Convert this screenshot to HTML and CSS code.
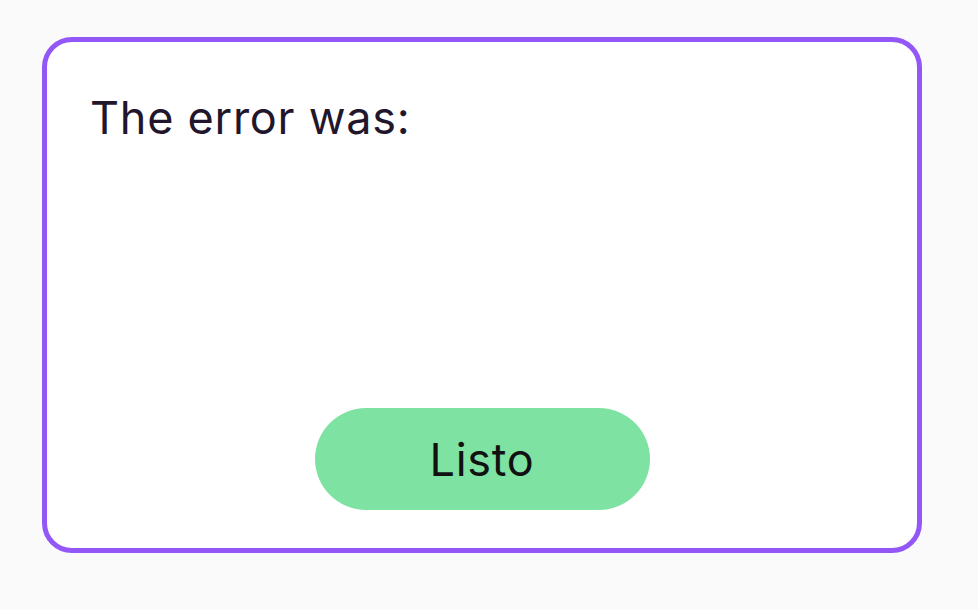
FILE: index.html
```html
<!DOCTYPE html>
<html>
<head>
<meta charset="utf-8">
<link rel="stylesheet" href="styles.css">
</head>
<body>
<div class="card">
  <p class="message">The error was:</p>
  <div class="actions">
    <button class="btn">Listo</button>
  </div>
</div>
</body>
</html>
```
FILE: styles.css
```css
html, body {
  margin: 0;
  padding: 0;
  background: #fafafa;
  font-family: Inter, "Noto Sans", sans-serif;
}
body {
  padding: 37px 0 0 42px;
}
.card {
  box-sizing: border-box;
  width: 880px;
  height: 516px;
  border: 5px solid #9257f6;
  border-radius: 30px;
  background: #ffffff;
  padding: 46px 43px 38px 43px;
  display: flex;
  flex-direction: column;
  justify-content: space-between;
}
.message {
  margin: 0;
  font-size: 45px;
  letter-spacing: 0.75px;
  line-height: 60px;
  color: #21162b;
}
.actions {
  display: flex;
  justify-content: center;
}
.btn {
  width: 335px;
  height: 102px;
  border: none;
  border-radius: 51px;
  background: #7de2a2;
  color: #111111;
  font-family: Inter, "Noto Sans", sans-serif;
  font-size: 45px;
  letter-spacing: 0.75px;
  padding: 0;
}
```
